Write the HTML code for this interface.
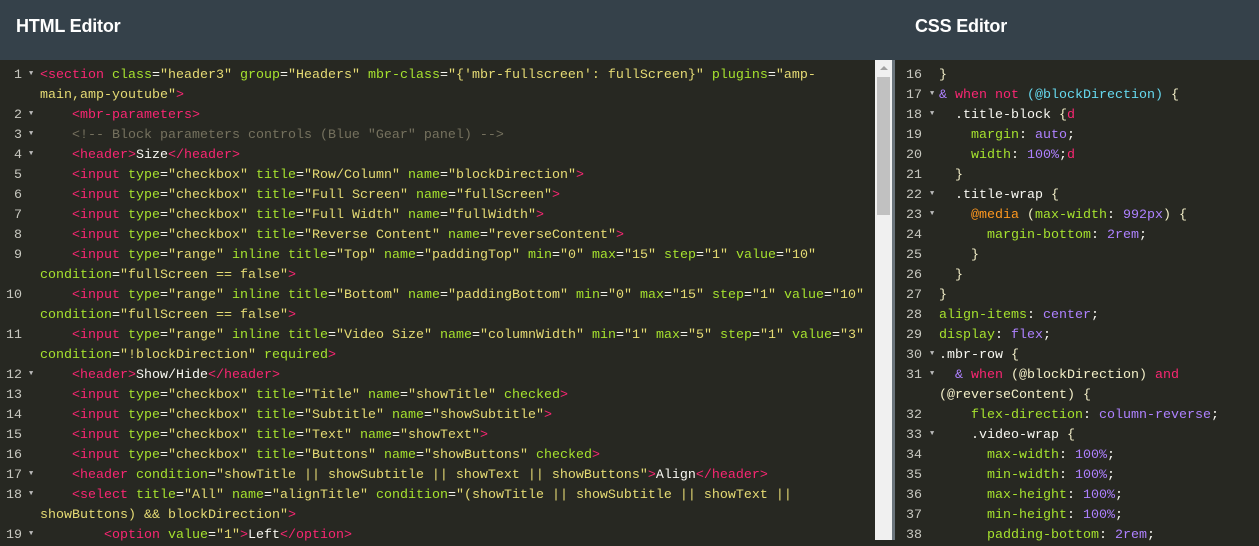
<!DOCTYPE html>
<html><head><meta charset="utf-8"><style>
*{margin:0;padding:0;box-sizing:border-box}
body{width:1259px;height:540px;overflow:hidden;background:#272822;position:relative;font-family:"Liberation Mono",monospace;font-size:13.33px}
.hdr{position:absolute;top:0;left:0;width:1259px;height:60px;background:#35414a}
.hdr span{position:absolute;top:16px;color:#fff;font-family:"Liberation Sans",sans-serif;font-size:18px;font-weight:bold;letter-spacing:-0.2px}
.ed{position:absolute;top:66px}
.r{height:20px;line-height:20px;white-space:pre;color:#f8f8f2;position:relative}
.n{position:absolute;text-align:right;color:#c8c8c0}
.a{position:absolute;color:#bbb;font-size:7px;line-height:16px}
.t{color:#f92672}.at{color:#a6e22e}.s{color:#e6db74}.c{color:#75715e}.w{color:#f8f8f2}
.p{color:#ae81ff}.cy{color:#66d9ef}.o{color:#fd971f}.b{color:#f3efc8}
#L .n{left:0;width:22px}#L .a{left:29px}#L .x{position:absolute;left:40px}
#R .n{left:0;width:27px}#R .a{left:35px}#R .x{position:absolute;left:44px}
</style></head><body>
<div class="hdr"><span style="left:16px">HTML Editor</span><span style="left:915px">CSS Editor</span></div>
<div style="position:absolute;left:875px;top:60px;width:17px;height:480px;background:#f0f0f0"></div>
<div style="position:absolute;left:877px;top:77px;width:13px;height:138px;background:#c1c1c1"></div>
<div style="position:absolute;left:880px;top:66px;width:0;height:0;border:4px solid transparent;border-bottom:4px solid #a0a0a0;border-top:0"></div>
<div style="position:absolute;left:892px;top:60px;width:3px;height:480px;background:#6b757c"></div>
<div class="ed" id="L" style="left:0;width:875px">
<div class="r"><span class="n">1</span><span class="a">▼</span><span class="x"><span class="t">&lt;section</span> <span class="at">class</span>=<span class="s">"header3"</span> <span class="at">group</span>=<span class="s">"Headers"</span> <span class="at">mbr-class</span>=<span class="s">"{'mbr-fullscreen': fullScreen}"</span> <span class="at">plugins</span>=<span class="s">"amp-</span></span></div>
<div class="r"><span class="x"><span class="s">main,amp-youtube"</span><span class="t">&gt;</span></span></div>
<div class="r"><span class="n">2</span><span class="a">▼</span><span class="x">    <span class="t">&lt;mbr-parameters&gt;</span></span></div>
<div class="r"><span class="n">3</span><span class="a">▼</span><span class="x">    <span class="c">&lt;!-- Block parameters controls (Blue "Gear" panel) --&gt;</span></span></div>
<div class="r"><span class="n">4</span><span class="a">▼</span><span class="x">    <span class="t">&lt;header&gt;</span>Size<span class="t">&lt;/header&gt;</span></span></div>
<div class="r"><span class="n">5</span><span class="x">    <span class="t">&lt;input</span> <span class="at">type</span>=<span class="s">"checkbox"</span> <span class="at">title</span>=<span class="s">"Row/Column"</span> <span class="at">name</span>=<span class="s">"blockDirection"</span><span class="t">&gt;</span></span></div>
<div class="r"><span class="n">6</span><span class="x">    <span class="t">&lt;input</span> <span class="at">type</span>=<span class="s">"checkbox"</span> <span class="at">title</span>=<span class="s">"Full Screen"</span> <span class="at">name</span>=<span class="s">"fullScreen"</span><span class="t">&gt;</span></span></div>
<div class="r"><span class="n">7</span><span class="x">    <span class="t">&lt;input</span> <span class="at">type</span>=<span class="s">"checkbox"</span> <span class="at">title</span>=<span class="s">"Full Width"</span> <span class="at">name</span>=<span class="s">"fullWidth"</span><span class="t">&gt;</span></span></div>
<div class="r"><span class="n">8</span><span class="x">    <span class="t">&lt;input</span> <span class="at">type</span>=<span class="s">"checkbox"</span> <span class="at">title</span>=<span class="s">"Reverse Content"</span> <span class="at">name</span>=<span class="s">"reverseContent"</span><span class="t">&gt;</span></span></div>
<div class="r"><span class="n">9</span><span class="x">    <span class="t">&lt;input</span> <span class="at">type</span>=<span class="s">"range"</span> <span class="at">inline</span> <span class="at">title</span>=<span class="s">"Top"</span> <span class="at">name</span>=<span class="s">"paddingTop"</span> <span class="at">min</span>=<span class="s">"0"</span> <span class="at">max</span>=<span class="s">"15"</span> <span class="at">step</span>=<span class="s">"1"</span> <span class="at">value</span>=<span class="s">"10"</span></span></div>
<div class="r"><span class="x"><span class="at">condition</span>=<span class="s">"fullScreen == false"</span><span class="t">&gt;</span></span></div>
<div class="r"><span class="n">10</span><span class="x">    <span class="t">&lt;input</span> <span class="at">type</span>=<span class="s">"range"</span> <span class="at">inline</span> <span class="at">title</span>=<span class="s">"Bottom"</span> <span class="at">name</span>=<span class="s">"paddingBottom"</span> <span class="at">min</span>=<span class="s">"0"</span> <span class="at">max</span>=<span class="s">"15"</span> <span class="at">step</span>=<span class="s">"1"</span> <span class="at">value</span>=<span class="s">"10"</span></span></div>
<div class="r"><span class="x"><span class="at">condition</span>=<span class="s">"fullScreen == false"</span><span class="t">&gt;</span></span></div>
<div class="r"><span class="n">11</span><span class="x">    <span class="t">&lt;input</span> <span class="at">type</span>=<span class="s">"range"</span> <span class="at">inline</span> <span class="at">title</span>=<span class="s">"Video Size"</span> <span class="at">name</span>=<span class="s">"columnWidth"</span> <span class="at">min</span>=<span class="s">"1"</span> <span class="at">max</span>=<span class="s">"5"</span> <span class="at">step</span>=<span class="s">"1"</span> <span class="at">value</span>=<span class="s">"3"</span></span></div>
<div class="r"><span class="x"><span class="at">condition</span>=<span class="s">"!blockDirection"</span> <span class="at">required</span><span class="t">&gt;</span></span></div>
<div class="r"><span class="n">12</span><span class="a">▼</span><span class="x">    <span class="t">&lt;header&gt;</span>Show/Hide<span class="t">&lt;/header&gt;</span></span></div>
<div class="r"><span class="n">13</span><span class="x">    <span class="t">&lt;input</span> <span class="at">type</span>=<span class="s">"checkbox"</span> <span class="at">title</span>=<span class="s">"Title"</span> <span class="at">name</span>=<span class="s">"showTitle"</span> <span class="at">checked</span><span class="t">&gt;</span></span></div>
<div class="r"><span class="n">14</span><span class="x">    <span class="t">&lt;input</span> <span class="at">type</span>=<span class="s">"checkbox"</span> <span class="at">title</span>=<span class="s">"Subtitle"</span> <span class="at">name</span>=<span class="s">"showSubtitle"</span><span class="t">&gt;</span></span></div>
<div class="r"><span class="n">15</span><span class="x">    <span class="t">&lt;input</span> <span class="at">type</span>=<span class="s">"checkbox"</span> <span class="at">title</span>=<span class="s">"Text"</span> <span class="at">name</span>=<span class="s">"showText"</span><span class="t">&gt;</span></span></div>
<div class="r"><span class="n">16</span><span class="x">    <span class="t">&lt;input</span> <span class="at">type</span>=<span class="s">"checkbox"</span> <span class="at">title</span>=<span class="s">"Buttons"</span> <span class="at">name</span>=<span class="s">"showButtons"</span> <span class="at">checked</span><span class="t">&gt;</span></span></div>
<div class="r"><span class="n">17</span><span class="a">▼</span><span class="x">    <span class="t">&lt;header</span> <span class="at">condition</span>=<span class="s">"showTitle || showSubtitle || showText || showButtons"</span><span class="t">&gt;</span>Align<span class="t">&lt;/header&gt;</span></span></div>
<div class="r"><span class="n">18</span><span class="a">▼</span><span class="x">    <span class="t">&lt;select</span> <span class="at">title</span>=<span class="s">"All"</span> <span class="at">name</span>=<span class="s">"alignTitle"</span> <span class="at">condition</span>=<span class="s">"(showTitle || showSubtitle || showText ||</span></span></div>
<div class="r"><span class="x"><span class="s">showButtons) &amp;&amp; blockDirection"</span><span class="t">&gt;</span></span></div>
<div class="r"><span class="n">19</span><span class="a">▼</span><span class="x">        <span class="t">&lt;option</span> <span class="at">value</span>=<span class="s">"1"</span><span class="t">&gt;</span>Left<span class="t">&lt;/option&gt;</span></span></div>
</div>
<div class="ed" id="R" style="left:895px;width:364px">
<div class="r"><span class="n">16</span><span class="x"><span class="b">}</span></span></div>
<div class="r"><span class="n">17</span><span class="a">▼</span><span class="x"><span class="p">&amp;</span> <span class="t">when not</span> <span class="cy">(@blockDirection)</span> <span class="b">{</span></span></div>
<div class="r"><span class="n">18</span><span class="a">▼</span><span class="x">  .title-block <span class="b">{</span><span class="t">d</span></span></div>
<div class="r"><span class="n">19</span><span class="x">    <span class="at">margin</span>: <span class="p">auto</span>;</span></div>
<div class="r"><span class="n">20</span><span class="x">    <span class="at">width</span>: <span class="p">100%</span>;<span class="t">d</span></span></div>
<div class="r"><span class="n">21</span><span class="x">  <span class="b">}</span></span></div>
<div class="r"><span class="n">22</span><span class="a">▼</span><span class="x">  .title-wrap <span class="b">{</span></span></div>
<div class="r"><span class="n">23</span><span class="a">▼</span><span class="x">    <span class="o">@media</span> <span class="b">(</span><span class="at">max-width</span>: <span class="p">992px</span><span class="b">)</span> <span class="b">{</span></span></div>
<div class="r"><span class="n">24</span><span class="x">      <span class="at">margin-bottom</span>: <span class="p">2rem</span>;</span></div>
<div class="r"><span class="n">25</span><span class="x">    <span class="b">}</span></span></div>
<div class="r"><span class="n">26</span><span class="x">  <span class="b">}</span></span></div>
<div class="r"><span class="n">27</span><span class="x"><span class="b">}</span></span></div>
<div class="r"><span class="n">28</span><span class="x"><span class="at">align-items</span>: <span class="p">center</span>;</span></div>
<div class="r"><span class="n">29</span><span class="x"><span class="at">display</span>: <span class="p">flex</span>;</span></div>
<div class="r"><span class="n">30</span><span class="a">▼</span><span class="x">.mbr-row <span class="b">{</span></span></div>
<div class="r"><span class="n">31</span><span class="a">▼</span><span class="x">  <span class="p">&amp;</span> <span class="t">when</span> <span class="b">(@blockDirection)</span> <span class="t">and</span></span></div>
<div class="r"><span class="x"><span class="b">(@reverseContent)</span> <span class="b">{</span></span></div>
<div class="r"><span class="n">32</span><span class="x">    <span class="at">flex-direction</span>: <span class="p">column-reverse</span>;</span></div>
<div class="r"><span class="n">33</span><span class="a">▼</span><span class="x">    .video-wrap <span class="b">{</span></span></div>
<div class="r"><span class="n">34</span><span class="x">      <span class="at">max-width</span>: <span class="p">100%</span>;</span></div>
<div class="r"><span class="n">35</span><span class="x">      <span class="at">min-width</span>: <span class="p">100%</span>;</span></div>
<div class="r"><span class="n">36</span><span class="x">      <span class="at">max-height</span>: <span class="p">100%</span>;</span></div>
<div class="r"><span class="n">37</span><span class="x">      <span class="at">min-height</span>: <span class="p">100%</span>;</span></div>
<div class="r"><span class="n">38</span><span class="x">      <span class="at">padding-bottom</span>: <span class="p">2rem</span>;</span></div>
</div>
</body></html>
